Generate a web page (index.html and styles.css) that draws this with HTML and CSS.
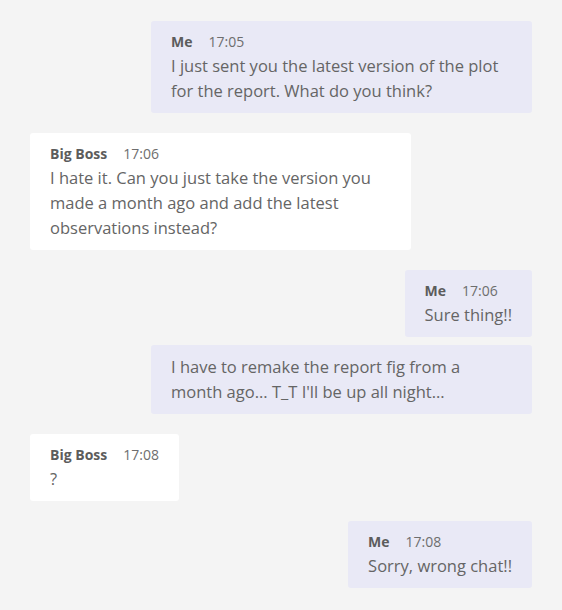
FILE: index.html
```html
<!DOCTYPE html>
<html lang="en">
<head>
<meta charset="utf-8">
<title>Chat</title>
<link rel="stylesheet" href="styles.css">
</head>
<body>
<main class="chat">
  <div class="msg me">
    <div class="meta"><span class="name">Me</span><span class="time">17:05</span></div>
    <div class="text">I just sent you the latest version of the plot for the report. What do you think?</div>
  </div>
  <div class="msg them">
    <div class="meta"><span class="name">Big Boss</span><span class="time">17:06</span></div>
    <div class="text">I hate it. Can you just take the version you made a month ago and add the latest observations instead?</div>
  </div>
  <div class="msg me">
    <div class="meta"><span class="name">Me</span><span class="time">17:06</span></div>
    <div class="text">Sure thing!!</div>
  </div>
  <div class="msg me cont">
    <div class="text">I have to remake the report fig from a month ago... T_T I'll be up all night...</div>
  </div>
  <div class="msg them">
    <div class="meta"><span class="name">Big Boss</span><span class="time">17:08</span></div>
    <div class="text">?</div>
  </div>
  <div class="msg me">
    <div class="meta"><span class="name">Me</span><span class="time">17:08</span></div>
    <div class="text">Sorry, wrong chat!!</div>
  </div>
</main>
</body>
</html>
```
FILE: styles.css
```css
html, body {
  margin: 0;
  background: #f4f4f4;
}

body {
  font-family: "Open Sans", "Noto Sans", sans-serif;
  color: #656565;
}

.chat {
  display: flex;
  flex-direction: column;
  gap: 20px;
  padding: 21px 30px 20px;
}

.msg {
  max-width: 381px;
  box-sizing: border-box;
  padding: 9px 20px 10px;
  border-radius: 3px;
}

.msg.me {
  align-self: flex-end;
  background: #e9e9f6;
}

.msg.them {
  align-self: flex-start;
  background: #ffffff;
}

.msg.cont {
  margin-top: -12px;
}

.meta {
  display: flex;
  gap: 16px;
  font-size: 14px;
  line-height: 23px;
}

.name {
  font-weight: 700;
  color: #5c5c5c;
}

.time {
  color: #6e6e6e;
}

.text {
  font-size: 16.5px;
  line-height: 25px;
}
```
